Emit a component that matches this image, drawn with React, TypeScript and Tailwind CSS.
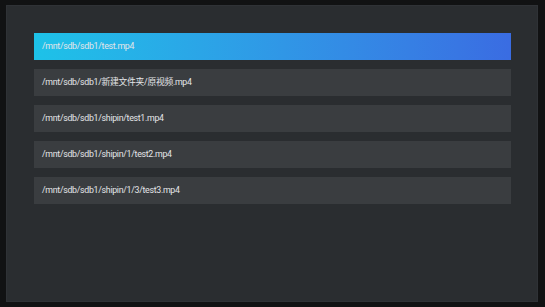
const files = [
  '/mnt/sdb/sdb1/test.mp4',
  '/mnt/sdb/sdb1/新建文件夹/原视频.mp4',
  '/mnt/sdb/sdb1/shipin/test1.mp4',
  '/mnt/sdb/sdb1/shipin/1/test2.mp4',
  '/mnt/sdb/sdb1/shipin/1/3/test3.mp4',
];

export default function App() {
  const selected = 0;
  return (
    <div className="flex h-[307px] w-[545px] bg-[#111213] pb-[5px] pl-[6px] pr-[7px] pt-[5px]">
      <div className="flex flex-1 flex-col gap-[9px] border border-[#2f3236] bg-[#2a2d30] pl-[27px] pr-[26px] pt-[27px]">
        {files.map((f, i) => (
          <div
            key={f}
            className={`flex h-[27px] items-center px-[8px] text-[8.8px] tracking-[-0.3px] text-[#e4e6e8] ${
              i === selected ? 'bg-gradient-to-r from-[#1dc2e8] to-[#3a6ce2]' : 'bg-[#3a3d40]'
            }`}
            style={{ fontFamily: 'Roboto, "Noto Sans CJK SC", sans-serif' }}
          >
            {f}
          </div>
        ))}
      </div>
    </div>
  );
}
